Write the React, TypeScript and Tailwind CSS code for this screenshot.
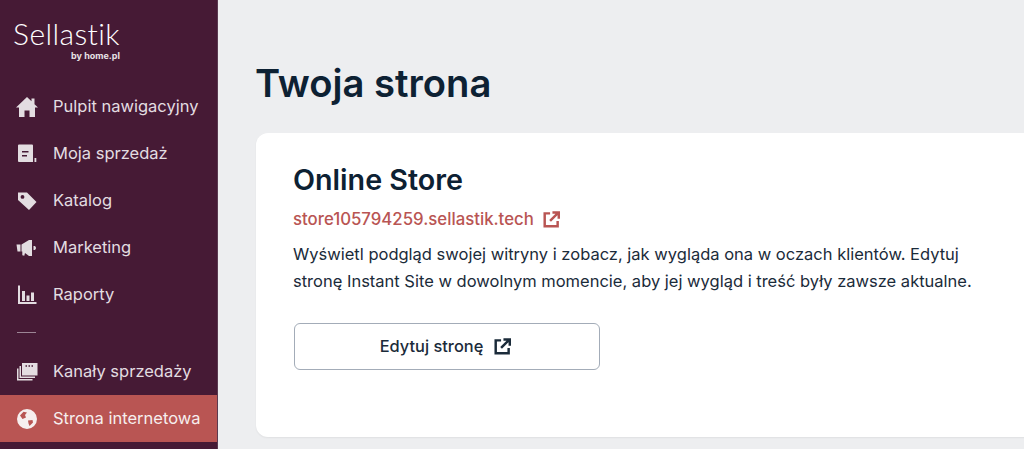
import type { ReactNode } from "react";

const ExternalIcon = ({ className }: { className: string }) => (
  <svg viewBox="0 0 18 18" fill="none" stroke="currentColor" strokeWidth="2.6" className={className}>
    <path d="M7.5 2.500H1.800v13.700h13.700v-5.700" />
    <path d="M7.500 10.500 16 2M10 1.500h6.700v6.700" />
  </svg>
);

const HomeIcon = () => (
  <svg viewBox="0 0 22 20" className="h-5 w-[22px]" fill="currentColor">
    <path d="M11 0 0 10.500h3V20h5.500v-6.500h5V20H19v-9.500h3l-3.500-3.300V1.500H15.500v2.800z" />
  </svg>
);

const SalesIcon = () => (
  <svg viewBox="0 0 20 20" className="h-5 w-5" fill="currentColor">
    <path fillRule="evenodd" d="M1 1.500A1 1 0 0 1 2 .5h13a1 1 0 0 1 1 1V18H2a1 1 0 0 1-1-1zM5 7h6.500v1.500H5zm0 4h5v1.500H5z" />
    <rect x="17.500" y="14" width="1.800" height="4" />
  </svg>
);

const TagIcon = () => (
  <svg viewBox="0 0 20 20" className="h-5 w-5" fill="currentColor">
    <path fillRule="evenodd" d="M1 1.500h9l9.500 9.500-7.500 8-11-10zm4.500 2.500a1.900 1.900 0 1 0 0 3.800 1.900 1.900 0 0 0 0-3.800z" />
  </svg>
);

const MegaphoneIcon = () => (
  <svg viewBox="0 0 22 20" className="h-5 w-[22px]" fill="currentColor">
    <path d="M0.500 6.500h4v7h-3zM5.500 6.500 13 2h3v16h-3L9 15l-.7 2.800-2-.6V13.500h-.8zM17.500 8h1.200a2.200 2.200 0 0 1 0 4h-1.200z" />
  </svg>
);

const ChartIcon = () => (
  <svg viewBox="0 0 20 20" className="h-5 w-5" fill="currentColor">
    <path d="M1 .500h2v16.500h16.500v2H1zM5 6h3v10H5zm4.500 4.500h3V16h-3zM14 7.500h3V16h-3z" />
  </svg>
);

const ChannelsIcon = () => (
  <svg viewBox="0 0 22 20" className="h-5 w-[22px]" fill="currentColor">
    <path fillRule="evenodd" d="M6 1h15.500v12.500H6zm3.500 2.200v1.500h1.500V3.200zm3 0v1.500H14V3.200zm3 0v1.500H17V3.200z" />
    <path d="M3.500 4H5v10.500h14V16H3.500z" />
    <path d="M1 6.500h1.500v10.500h14v1.500H1z" />
  </svg>
);

const GlobeIcon = () => (
  <svg viewBox="0 0 20 20" className="h-5 w-5" fill="currentColor">
    <path fillRule="evenodd" d="M10 0a10 10 0 1 0 0 20 10 10 0 0 0 0-20zM3 6.500 6.500 2.800 10 3.500 8 6 9 8.500 5.500 10zM11 11.500l4.500-.5.500 2.500-3.500 3.500-1-2.500z" />
  </svg>
);

const nav: { label: string; icon: ReactNode }[] = [
  { label: "Pulpit nawigacyjny", icon: <HomeIcon /> },
  { label: "Moja sprzedaż", icon: <SalesIcon /> },
  { label: "Katalog", icon: <TagIcon /> },
  { label: "Marketing", icon: <MegaphoneIcon /> },
  { label: "Raporty", icon: <ChartIcon /> },
];

function NavItem({ label, icon, active }: { label: string; icon: ReactNode; active?: boolean }) {
  return (
    <div className={`flex h-[47px] items-center text-[16.5px] ${active ? "bg-[#b95553] text-[#f6eeee]" : "text-[#e3dde1]"}`}>
      <span className="flex w-[53px] justify-center px-[6px]">{icon}</span>
      {label}
    </div>
  );
}

export default function App() {
  return (
    <div className="flex h-[449px] overflow-hidden bg-[#edeef0] font-['Inter',sans-serif]">
      <aside className="w-[218px] shrink-0 border-r border-[#5a3a50] bg-[#461a35]">
        <div className="ml-[13px] flex h-[83px] w-[107px] flex-col items-end pt-[20px]">
          <span className="font-['Lato',sans-serif] text-[30px] leading-[26px] font-light tracking-[0.4px] text-white">Sellastik</span>
          <span className="mt-[4px] text-[9px] leading-[12px] font-bold text-[#e8e2e6]">by home.pl</span>
        </div>
        {nav.map((item) => (
          <NavItem key={item.label} {...item} />
        ))}
        <div className="mt-[14px] mb-[15px] ml-[17px] h-px w-[19px] bg-[#9c8595]" />
        <NavItem label="Kanały sprzedaży" icon={<ChannelsIcon />} />
        <NavItem label="Strona internetowa" icon={<GlobeIcon />} active />
      </aside>

      <main className="min-w-0 flex-1 pl-[38px] pt-[60px]">
        <h1 className="-ml-px text-[38.2px] leading-[46px] font-semibold text-[#0d2133]">Twoja strona</h1>
        <section className="mt-[27px] h-[304px] w-[800px] rounded-xl bg-white pl-[38px] pt-[29px] shadow-[0_1px_2px_rgba(0,0,0,0.06)]">
          <h2 className="-ml-px text-[28.7px] leading-9 font-semibold text-[#0d2133]">Online Store</h2>
          <a className="-ml-px mt-[9px] flex items-center gap-[9px] text-[16.8px] leading-6 font-medium text-[#b95553]">
            store105794259.sellastik.tech
            <ExternalIcon className="h-[17px] w-[17px]" />
          </a>
          <p className="-ml-px mt-[10px] w-[700px] text-[16.5px] leading-[27px] text-[#1b2b3a]">
            Wyświetl podgląd swojej witryny i zobacz, jak wygląda ona w oczach klientów. Edytuj
            <br />
            stronę Instant Site w dowolnym momencie, aby jej wygląd i treść były zawsze aktualne.
          </p>
          <button className="mt-[28px] flex h-[47px] w-[306px] items-center justify-center gap-[11px] rounded-md border-[1.5px] border-[#a3acb8] bg-white pr-[3px] text-[16.4px] font-medium text-[#1b2b3a]">
            Edytuj stronę
            <ExternalIcon className="h-[17px] w-[17px]" />
          </button>
        </section>
      </main>
    </div>
  );
}
